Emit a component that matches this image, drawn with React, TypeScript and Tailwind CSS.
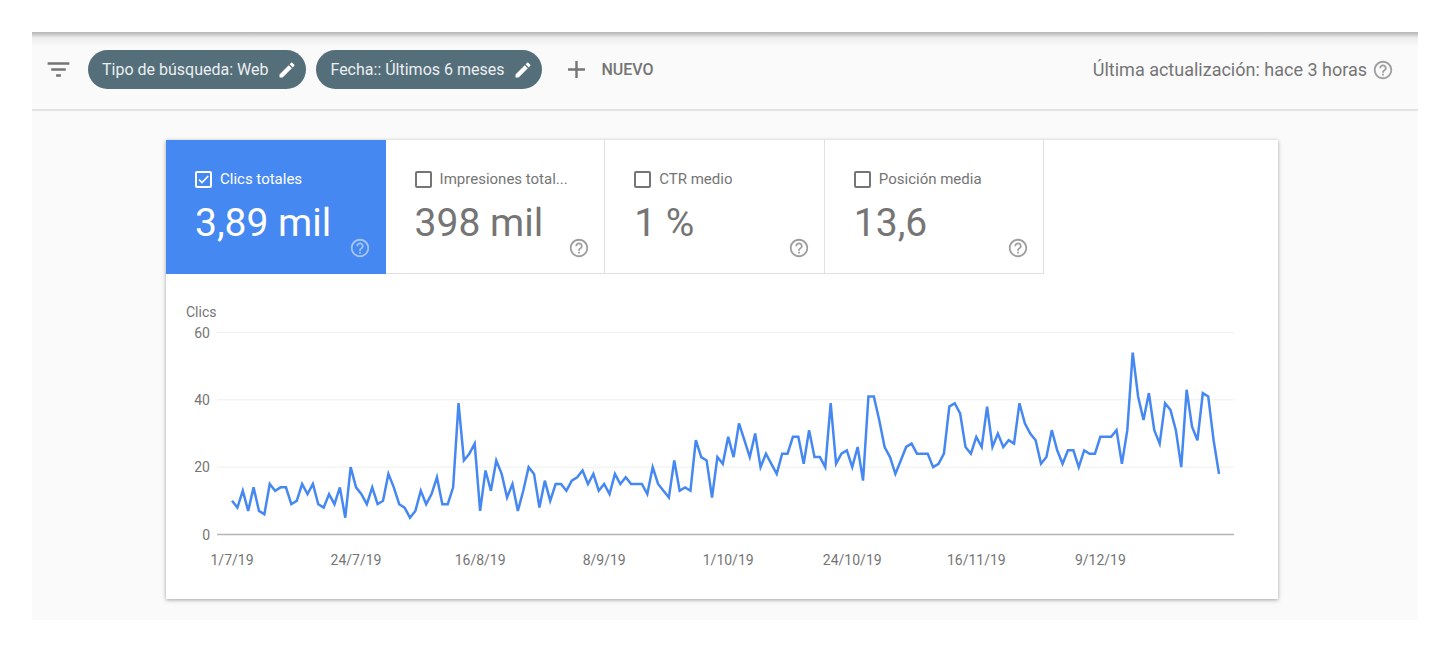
import React, { useState } from "react";
import { MdAdd, MdEdit, MdFilterList, MdHelpOutline } from "react-icons/md";

const filters = ["Tipo de búsqueda: Web", "Fecha:: Últimos 6 meses"];

const metrics = [
    { id: "clicks", label: "Clics totales", value: "3,89 mil" },
    { id: "impressions", label: "Impresiones total...", value: "398 mil" },
    { id: "ctr", label: "CTR medio", value: "1 %" },
    { id: "position", label: "Posición media", value: "13,6" },
];

// Clicks per day, 1/7/19 - 31/12/19
const clicks = [
    10, 8, 13, 7, 14, 7, 6, 15, 13, 14, 14, 9, 10, 15, 12, 15, 9, 8, 12, 9, 14, 5, 20,
    14, 12, 9, 14, 9, 10, 18, 14, 9, 8, 5, 7, 13, 9, 12, 17, 9, 9, 14, 39, 22, 24, 27,
    7, 19, 13, 22, 18, 11, 15, 7, 13, 20, 18, 8, 16, 10, 15, 15, 13, 16, 17, 19, 15, 18, 13,
    15, 12, 18, 15, 17, 15, 15, 15, 12, 20, 15, 13, 11, 22, 13, 14, 13, 28, 23, 22, 11, 23, 21,
    29, 23, 33, 28, 23, 30, 20, 24, 21, 18, 24, 24, 29, 29, 21, 31, 23, 23, 20, 39, 21, 24, 25,
    20, 26, 16, 41, 41, 34, 26, 23, 18, 22, 26, 27, 24, 24, 24, 20, 21, 24, 38, 39, 36, 26, 24,
    29, 26, 38, 26, 30, 26, 28, 27, 39, 33, 30, 28, 21, 23, 31, 25, 21, 25, 25, 20, 25, 24, 24,
    29, 29, 29, 31, 21, 31, 54, 41, 34, 42, 31, 27, 39, 37, 31, 20, 43, 32, 28, 42, 41, 28, 18,
];

const dates = ["1/7/19", "24/7/19", "16/8/19", "8/9/19", "1/10/19", "24/10/19", "16/11/19", "9/12/19"];

const xAt = (day: number) => 66 + (day * 987) / 183;
const yAt = (value: number) => 260.5 - (value * 202) / 60;

const Toolbar = () => (
    <header className="flex min-h-[79px] flex-wrap items-center border-b-2 border-[#e2e2e2] bg-linear-to-b from-[#b4b4b4] via-[#eeeeee] via-[6px] to-[#fafafa] to-[14px] pb-[2px] pl-3 pr-6 text-[#757575]">
        <button type="button" aria-label="Filtros" className="mr-[15px]">
            <MdFilterList size={29} />
        </button>
        <div className="flex flex-wrap gap-[10px]">
            {filters.map((filter) => (
                <button
                    key={filter}
                    type="button"
                    className="flex h-[39px] items-center gap-[9px] rounded-full bg-[#546e7a] pl-[14px] pr-[9px] text-[16px] text-[#eceff1]"
                >
                    {filter}
                    <MdEdit size={20} className="text-white" />
                </button>
            ))}
        </div>
        <button type="button" className="ml-5 flex items-center gap-[10px] text-[16px] font-medium">
            <MdAdd size={29} />
            NUEVO
        </button>
        <div className="ml-auto flex items-center gap-[5px] text-[18px]">
            <span>Última actualización: hace 3 horas</span>
            <button type="button" aria-label="Ayuda" className="text-[#9e9e9e]">
                <MdHelpOutline size={22} />
            </button>
        </div>
    </header>
);

type MetricProps = {
    id: string;
    label: string;
    value: string;
    active: boolean;
    onToggle: () => void;
};

const Metric = ({ id, label, value, active, onToggle }: MetricProps) => (
    <div
        className={`flex flex-col border-b border-r pb-[14px] pl-[29px] pr-[14px] pt-[30px] ${
            active
                ? "border-[#4688f1] bg-[#4688f1] text-white"
                : "border-[#e0e0e0] bg-white text-[#757575]"
        }`}
    >
        <label htmlFor={id} className="flex h-[18px] items-center gap-2 text-[15px]">
            <span className="grid shrink-0">
                <input
                    id={id}
                    type="checkbox"
                    checked={active}
                    onChange={onToggle}
                    className="col-start-1 row-start-1 size-[17px] appearance-none rounded-[2px] border-2 border-current"
                />
                {active && (
                    <svg
                        viewBox="0 0 17 17"
                        className="pointer-events-none col-start-1 row-start-1 size-[17px] fill-none stroke-current"
                        strokeWidth="1.6"
                    >
                        <path d="M4 8.5L7 11.5L13.3 5" />
                    </svg>
                )}
            </span>
            <span className="truncate">{label}</span>
        </label>
        <div className="mt-[15px] flex h-[56px] justify-between">
            <span className="text-[39px] leading-[40px]">{value}</span>
            <button
                type="button"
                aria-label={`Ayuda: ${label}`}
                className={`self-end ${active ? "text-white/50" : "text-[#9e9e9e]"}`}
            >
                <MdHelpOutline size={22} />
            </button>
        </div>
    </div>
);

const ClicksChart = () => (
    <svg viewBox="0 0 1112 325" className="block h-auto w-full" role="img" aria-label="Clics por día">
        <g fill="#757575" fontSize="14">
            <text x="20" y="43">Clics</text>
            {[60, 40, 20, 0].map((tick) => (
                <text key={tick} x="44" y={yAt(tick) + 5} textAnchor="end">
                    {tick}
                </text>
            ))}
            {dates.map((date, index) => (
                <text key={date} x={xAt(index * 23)} y="291" textAnchor="middle">
                    {date}
                </text>
            ))}
        </g>
        {[60, 40, 20].map((tick) => (
            <line key={tick} x1="51" x2="1068" y1={yAt(tick)} y2={yAt(tick)} stroke="#eeeeee" />
        ))}
        <line x1="51" x2="1068" y1="260.5" y2="260.5" stroke="#b5b5b5" strokeWidth="1.5" />
        <polyline
            points={clicks.map((value, day) => `${xAt(day)},${yAt(value)}`).join(" ")}
            fill="none"
            stroke="#4688f1"
            strokeWidth="2.5"
        />
    </svg>
);

const App = () => {
    const [selected, setSelected] = useState(["clicks"]);

    const toggle = (id: string) =>
        setSelected((current) =>
            current.includes(id) ? current.filter((item) => item !== id) : [...current, id]
        );

    return (
        <div className="bg-white pb-[30px] pl-8 pr-[30px] pt-8 font-[Roboto,Arial,sans-serif]">
            <div className="bg-[#fafafa]">
                <Toolbar />
                <main className="pb-[21px] pl-[134px] pr-[140px] pt-[29px]">
                    <section className="bg-white shadow-[0_1px_4px_rgba(0,0,0,0.36)]">
                        {/* Metrics */}
                        <div className="grid w-[79%] grid-cols-4">
                            {metrics.map((metric) => (
                                <Metric
                                    key={metric.id}
                                    {...metric}
                                    active={selected.includes(metric.id)}
                                    onToggle={() => toggle(metric.id)}
                                />
                            ))}
                        </div>

                        {/* Chart */}
                        <ClicksChart />
                    </section>
                </main>
            </div>
        </div>
    );
};

export default App;
